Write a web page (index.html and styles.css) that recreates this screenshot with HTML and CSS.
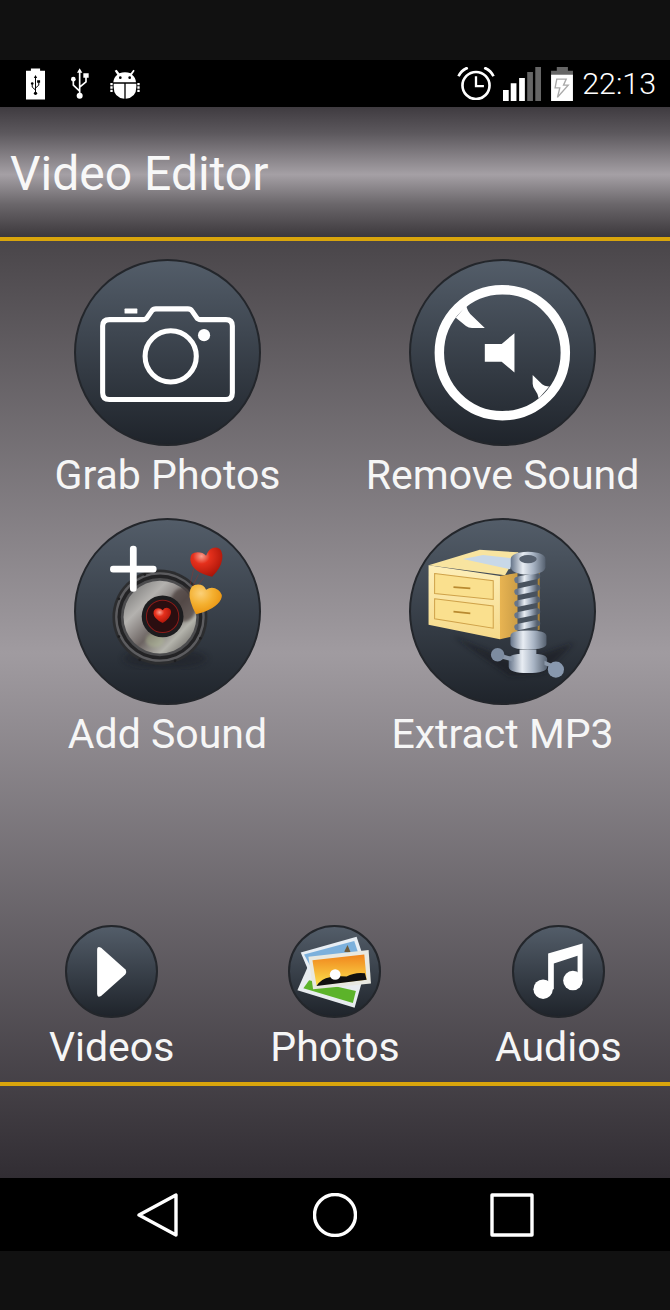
FILE: index.html
```html
<!DOCTYPE html>
<html lang="en">
<head>
    <meta charset="UTF-8">
    <meta name="viewport" content="width=device-width, initial-scale=1.0">
    <title>Video Editor</title>
    <link rel="stylesheet" href="styles.css">
</head>
<body>
    <div class="edge"></div>

    <div class="status-bar">
        <div class="status-left">
            <svg class="ic-usb-batt" viewBox="77 52 58 95">
                <path fill="#fff" d="M92 52h28v7h15v88H77V59h15z"/>
                <g fill="none" stroke="#000" stroke-width="3">
                    <path d="M106 78v50M106 118l-10-9v-9M106 112l10-9v-9"/>
                </g>
                <path d="M106 72l-5 9h10zM111 88h9v8h-9z"/>
                <circle cx="96" cy="98" r="4"/>
                <circle cx="106" cy="128" r="5"/>
            </svg>
            <svg class="ic-usb" viewBox="213 55 54 92">
                <g fill="none" stroke="#fff" stroke-width="5">
                    <path d="M239 65v75M239 124l-19-18V92M239 112l19-16V80"/>
                </g>
                <path fill="#fff" d="M239 55l-8 14h16zM250 70h16v14h-16z"/>
                <circle fill="#fff" cx="220" cy="88" r="7"/>
                <circle fill="#fff" cx="239" cy="138" r="9"/>
            </svg>
            <svg class="ic-bug" viewBox="330 55 90 90">
                <path fill="#fff" d="M350 57l8 11q17-7 34 0l8-11 4 3-8 12q11 8 12 23h-68q1-15 12-23l-8-12z"/>
                <circle cx="361" cy="81" r="4"/>
                <circle cx="389" cy="81" r="4"/>
                <path fill="#fff" d="M341 99h32v45q-32-3-32-35zM377 99h32v10q0 32-32 35z"/>
                <path fill="#fff" d="M331 97h7v7h-7zM331 107h7v7h-7zM331 117h7v7h-7zM412 97h7v7h-7zM412 107h7v7h-7zM412 117h7v7h-7z"/>
            </svg>
        </div>
        <div class="status-right">
            <svg class="ic-alarm" viewBox="50 34 114 100">
                <circle cx="107" cy="90" r="41" fill="none" stroke="#fff" stroke-width="8"/>
                <path d="M107 62v30h24" fill="none" stroke="#fff" stroke-width="7"/>
                <path d="M54 62q8-18 28-26M160 62q-8-18-28-26" fill="none" stroke="#fff" stroke-width="8"/>
            </svg>
            <svg class="ic-signal" viewBox="190 32 113 101">
                <path fill="#fff" d="M190 100h17v33h-17zM213 80h17v53h-17zM238 65h17v68h-17z"/>
                <path fill="#666" d="M262 47h17v86h-17zM286 32h17v101h-17z"/>
            </svg>
            <svg class="ic-batt" viewBox="335 32 65 101">
                <path fill="#666" d="M352 32h33v11h15v14h-65V43h17z"/>
                <path fill="#fff" d="M335 55h65v78h-65z"/>
                <path fill="none" stroke="#aaa" stroke-width="4" d="M352 68h28l-8 18h14l-32 36 7-28h-14z"/>
            </svg>
            <span class="clock">22:13</span>
        </div>
    </div>

    <header class="app-bar">
        <h1>Video Editor</h1>
    </header>

    <main class="content">
        <div class="tools">
            <div class="tool">
                <div class="disc">
                    <svg viewBox="45 28 555 555">
                        <g fill="none" stroke="#fff" stroke-width="15" stroke-linejoin="round">
                            <path d="M150 208h100q8 0 12-6l14-20q4-6 12-6h95q8 0 12 6l14 20q4 6 12 6h75q19 0 19 19v198q0 20-19 20H150q-20 0-20-20V227q0-19 20-19z"/>
                            <circle cx="332" cy="317" r="76"/>
                        </g>
                        <circle fill="#fff" cx="431" cy="254" r="18"/>
                        <rect fill="#fff" x="195" y="175" width="38" height="15" rx="2"/>
                    </svg>
                </div>
                <span class="tool-name">Grab Photos</span>
            </div>
            <div class="tool">
                <div class="disc">
                    <svg viewBox="30 28 555 555">
                        <circle cx="307" cy="306" r="187" fill="none" stroke="#fff" stroke-width="28"/>
                        <path fill="#fff" d="M200 165q2 18 18 32l37 36h-38q-10 0-18-6l-30-25zM397 372l28 28q8 7 22 6l-32 36q-2-14-10-24-8-10-8-20zM255 280h50l38-32v117l-38-32h-50z"/>
                    </svg>
                </div>
                <span class="tool-name">Remove Sound</span>
            </div>
            <div class="tool">
                <div class="disc">
                    <svg viewBox="30 28 555 555">
                        <defs>
                            <linearGradient id="cone" x1="0" y1="0" x2="1" y2="1">
                                <stop offset="0" stop-color="#6a6a6a"/>
                                <stop offset=".3" stop-color="#b4b2af"/>
                                <stop offset=".55" stop-color="#6c6462"/>
                                <stop offset=".75" stop-color="#b4b4ac"/>
                                <stop offset="1" stop-color="#4e4a48"/>
                            </linearGradient>
                            <radialGradient id="redHeart" cx="35%" cy="30%" r="75%">
                                <stop offset="0" stop-color="#f8a090"/>
                                <stop offset=".35" stop-color="#e5301c"/>
                                <stop offset="1" stop-color="#a81408"/>
                            </radialGradient>
                            <radialGradient id="goldHeart" cx="35%" cy="30%" r="75%">
                                <stop offset="0" stop-color="#fbd078"/>
                                <stop offset=".5" stop-color="#f4b030"/>
                                <stop offset="1" stop-color="#e8900c"/>
                            </radialGradient>
                            <filter id="soft"><feGaussianBlur stdDeviation="10"/></filter>
                            <filter id="soft2"><feGaussianBlur stdDeviation="5"/></filter>
                        </defs>
                        <ellipse cx="300" cy="445" rx="125" ry="28" fill="#15181c" opacity=".35" filter="url(#soft)"/>
                        <circle cx="285" cy="322" r="141" fill="#2c2d2f"/>
                        <circle cx="285" cy="322" r="133" fill="#5c5c5f"/>
                        <circle cx="285" cy="322" r="126" fill="#232325"/>
                        <circle cx="285" cy="322" r="116" fill="#4c4c4e"/>
                        <circle cx="285" cy="322" r="108" fill="url(#cone)"/>
                        <ellipse cx="355" cy="285" rx="40" ry="50" fill="#4a3c3a" opacity=".7" filter="url(#soft2)"/>
                        <ellipse cx="270" cy="390" rx="28" ry="22" fill="#b8c49a" opacity=".4" filter="url(#soft2)"/>
                        <circle cx="293" cy="320" r="62" fill="#1c1c1e"/>
                        <circle cx="293" cy="320" r="48" fill="#2a0e10" stroke="#8a1a18" stroke-width="3"/>
                        <path fill="url(#redHeart)" d="M293 340q-26-14-27-28-1-14 13-16 9-1 14 6 6-9 16-7 10 3 9 14-2 16-25 31z"/>
                        <g fill="#1e1e20">
                            <circle cx="163" cy="268" r="4"/>
                            <circle cx="163" cy="380" r="4"/>
                            <circle cx="225" cy="449" r="4"/>
                            <circle cx="330" cy="452" r="4"/>
                            <circle cx="405" cy="385" r="4"/>
                            <circle cx="240" cy="196" r="4"/>
                        </g>
                        <path stroke="#a03028" stroke-width="2" opacity=".6" d="M385 180l-10 45M400 195l-18 35M415 205l-22 30"/>
                        <path fill="url(#redHeart)" d="M440 202q-60-12-65-50-1-22 22-22 16 0 25 10 10-28 34-24 17 5 14 34-4 28-30 52z"/>
                        <path fill="url(#goldHeart)" d="M392 314q-22-42-19-64 2-25 25-25 18 0 24 16 18-12 36 1 16 13 8 28-14 28-74 44z"/>
                        <g fill="#fff">
                            <rect x="196" y="110" width="20" height="137" rx="9"/>
                            <rect x="137" y="170" width="138" height="20" rx="9"/>
                        </g>
                    </svg>
                </div>
                <span class="tool-name">Add Sound</span>
            </div>
            <div class="tool">
                <div class="disc">
                    <svg viewBox="30 28 555 555">
                        <defs>
                            <linearGradient id="cabFront" x1="0" y1="0" x2="0" y2="1">
                                <stop offset="0" stop-color="#fdeeb8"/>
                                <stop offset="1" stop-color="#f6da8a"/>
                            </linearGradient>
                            <linearGradient id="cabSide" x1="0" y1="0" x2="1" y2="0">
                                <stop offset="0" stop-color="#e8b452"/>
                                <stop offset="1" stop-color="#a88238"/>
                            </linearGradient>
                            <linearGradient id="steel" x1="0" y1="0" x2="1" y2="0">
                                <stop offset="0" stop-color="#66758a"/>
                                <stop offset=".35" stop-color="#e8edf3"/>
                                <stop offset=".65" stop-color="#a8b4c4"/>
                                <stop offset="1" stop-color="#55606f"/>
                            </linearGradient>
                            <filter id="shade"><feGaussianBlur stdDeviation="8"/></filter>
                        </defs>
                        <path fill="#14171b" opacity=".5" filter="url(#shade)" d="M160 378l190 80 170-60-90 90-100 10z"/>
                        <path fill="#f8e4a0" d="M88 168l152-46 115 8-40 68z"/>
                        <path fill="#c8d8e8" d="M190 150l60-12 90 10-10 32z"/>
                        <path fill="url(#cabSide)" d="M300 200l118-20v180l-118 28z"/>
                        <path fill="url(#cabFront)" d="M88 168l212 32v188L88 345z"/>
                        <g fill="#fae08e" stroke="#cfa24a" stroke-width="3">
                            <path d="M106 193l174 21v56l-174-18z"/>
                            <path d="M106 268l174 21v66l-174-28z"/>
                        </g>
                        <path stroke="#b98a30" stroke-width="5" d="M162 233l50 4M162 306l50 5"/>
                        <path fill="#48525e" d="M352 190h60v190h-60z"/>
                        <g fill="none" stroke="url(#steel)" stroke-width="19" stroke-linecap="round">
                            <path d="M352 212l58-12M352 247l58-12M352 282l58-12M352 317l58-12M352 352l58-12"/>
                        </g>
                        <path fill="url(#steel)" d="M332 150q0-20 51-22 52 2 52 22v24q-2 20-52 22-49-2-51-22z"/>
                        <ellipse cx="383" cy="150" rx="26" ry="12" fill="#56606e"/>
                        <path fill="url(#steel)" d="M331 378q0-16 52-16 54 0 55 16v24q-1 16-55 16-52 0-52-16z"/>
                        <path fill="url(#steel)" d="M358 418h50v24h-50zM326 446q1-16 57-16 56 0 57 16v24q-2 18-57 18-55 0-57-18z"/>
                        <path fill="#8a97a8" d="M300 430l40 12v12l-40-10zM466 478l-34-14v-12l34 14z"/>
                        <circle cx="293" cy="434" r="20" fill="#7d8ca0"/>
                        <circle cx="466" cy="478" r="24" fill="#8898ae"/>
                    </svg>
                </div>
                <span class="tool-name">Extract MP3</span>
            </div>
        </div>

        <div class="media">
            <div class="tool">
                <div class="disc small">
                    <svg viewBox="76 30 278 278">
                        <path fill="#fff" d="M172 105q0-14 12-7l72 64q6 8 0 16l-72 64q-12 7-12-7z"/>
                    </svg>
                </div>
                <span class="tool-name">Videos</span>
            </div>
            <div class="tool">
                <div class="disc small">
                    <svg viewBox="747 30 278 278">
                        <defs>
                            <linearGradient id="sunset" x1="0" y1="0" x2="0" y2="1">
                                <stop offset="0" stop-color="#f0841c"/>
                                <stop offset="1" stop-color="#fce04c"/>
                            </linearGradient>
                        </defs>
                        <path fill="#e8ecef" d="M808 150l160 50-22 77-171-52z"/>
                        <path fill="#5cb32a" d="M810 195l140 32-9 36-148-44z"/>
                        <path fill="#e8eef4" d="M785 112l167-47 20 60-150 75z"/>
                        <path fill="#7cb0dc" d="M795 118l150-40 14 42-130 60z"/>
                        <path fill="#6e5a3a" d="M915 110l10-20 10 24z"/>
                        <path fill="#e8e8e0" d="M808 125l180-20 7 100-173 17z"/>
                        <path fill="url(#sunset)" d="M820 135l155-17 7 76-150 16z"/>
                        <path fill="#111" d="M832 212q15-22 40-26 25-5 50-2 25-14 55-10l5 20z"/>
                        <circle cx="888" cy="178" r="16" fill="#fff"/>
                    </svg>
                </div>
                <span class="tool-name">Photos</span>
            </div>
            <div class="tool">
                <div class="disc small">
                    <svg viewBox="97 30 278 278">
                        <path fill="#fff" d="M205 115l103-30v110h-15v-73l-71 23v77h-17z"/>
                        <circle fill="#fff" cx="190" cy="222" r="29"/>
                        <circle fill="#fff" cx="279" cy="196" r="29"/>
                    </svg>
                </div>
                <span class="tool-name">Audios</span>
            </div>
        </div>
        <div class="tray"></div>
    </main>

    <nav class="nav-bar">
        <svg class="nav-icon" viewBox="0 0 44 44">
            <path d="M3 22L40 2v40z" fill="none" stroke="#fff" stroke-width="3.4" stroke-linejoin="round"/>
        </svg>
        <svg class="nav-icon" viewBox="0 0 44 44">
            <circle cx="22" cy="22" r="20.5" fill="none" stroke="#fff" stroke-width="3.4"/>
        </svg>
        <svg class="nav-icon" viewBox="0 0 44 44">
            <rect x="2" y="2" width="40" height="40" fill="none" stroke="#fff" stroke-width="3.4" stroke-linejoin="round"/>
        </svg>
    </nav>

    <div class="edge bottom"></div>
</body>
</html>
```

FILE: styles.css
```css
html, body {
    margin: 0;
    padding: 0;
}
body {
    width: 670px;
    height: 1310px;
    overflow: hidden;
    display: flex;
    flex-direction: column;
    font-family: 'Roboto', sans-serif;
    color: #fff;
    background-color: #111;
}
.edge {
    height: 60px;
    background-color: #111;
}
.edge.bottom {
    height: 59px;
}
.status-bar {
    height: 47px;
    background-color: #000;
    display: flex;
    justify-content: space-between;
    align-items: center;
    padding: 0 14px 0 26px;
}
.status-left, .status-right {
    display: flex;
    align-items: center;
}
.ic-usb-batt {
    width: 19px;
    height: 32px;
    margin-right: 26px;
}
.ic-usb {
    width: 18px;
    height: 31px;
    margin-right: 21px;
}
.ic-bug {
    width: 30px;
    height: 30px;
}
.ic-alarm {
    width: 38px;
    height: 33px;
    margin-right: 8px;
}
.ic-signal {
    width: 38px;
    height: 34px;
    margin-right: 10px;
}
.ic-batt {
    width: 22px;
    height: 34px;
    margin-right: 9px;
}
.clock {
    font-size: 30.4px;
    font-weight: 300;
}
.app-bar {
    height: 128px;
    padding-top: 2px;
    background: linear-gradient(#3f3b40 0%, #5c585d 20%, #a5a0a5 52%, #6a666a 75%, #3c383c 100%);
    border-bottom: 4px solid #d9a50c;
    display: flex;
    align-items: center;
}
.app-bar h1 {
    margin: 0 0 0 10px;
    font-size: 48px;
    font-weight: 400;
    color: #f8f8f8;
}
.content {
    height: 937px;
    display: flex;
    flex-direction: column;
    background: linear-gradient(#4a464a 0%, #a09ba0 44%, #312d33 100%);
}
.tools {
    display: grid;
    grid-template-columns: 1fr 1fr;
    row-gap: 20px;
    padding-top: 18px;
}
.tool {
    display: flex;
    flex-direction: column;
    align-items: center;
}
.disc {
    width: 187px;
    height: 187px;
    border-radius: 50%;
    box-sizing: border-box;
    border: 2px solid #23262b;
    background: linear-gradient(#535d69, #1f242b);
}
.disc svg {
    display: block;
    margin: -2px;
    width: 187px;
    height: 187px;
}
.disc.small {
    width: 93px;
    height: 93px;
}
.disc.small svg {
    width: 93px;
    height: 93px;
}
.tool-name {
    font-size: 41px;
    line-height: 46px;
    margin-top: 6px;
    color: #f6f6f6;
    white-space: nowrap;
}
.media {
    display: grid;
    grid-template-columns: repeat(3, 1fr);
    margin-top: auto;
    height: 157px;
    border-bottom: 4px solid #d9a50c;
}
.tray {
    height: 92px;
}
.nav-bar {
    height: 73px;
    background-color: #000;
    display: flex;
    justify-content: center;
    align-items: center;
    gap: 133px;
}
.nav-icon {
    width: 44px;
    height: 44px;
}
```
